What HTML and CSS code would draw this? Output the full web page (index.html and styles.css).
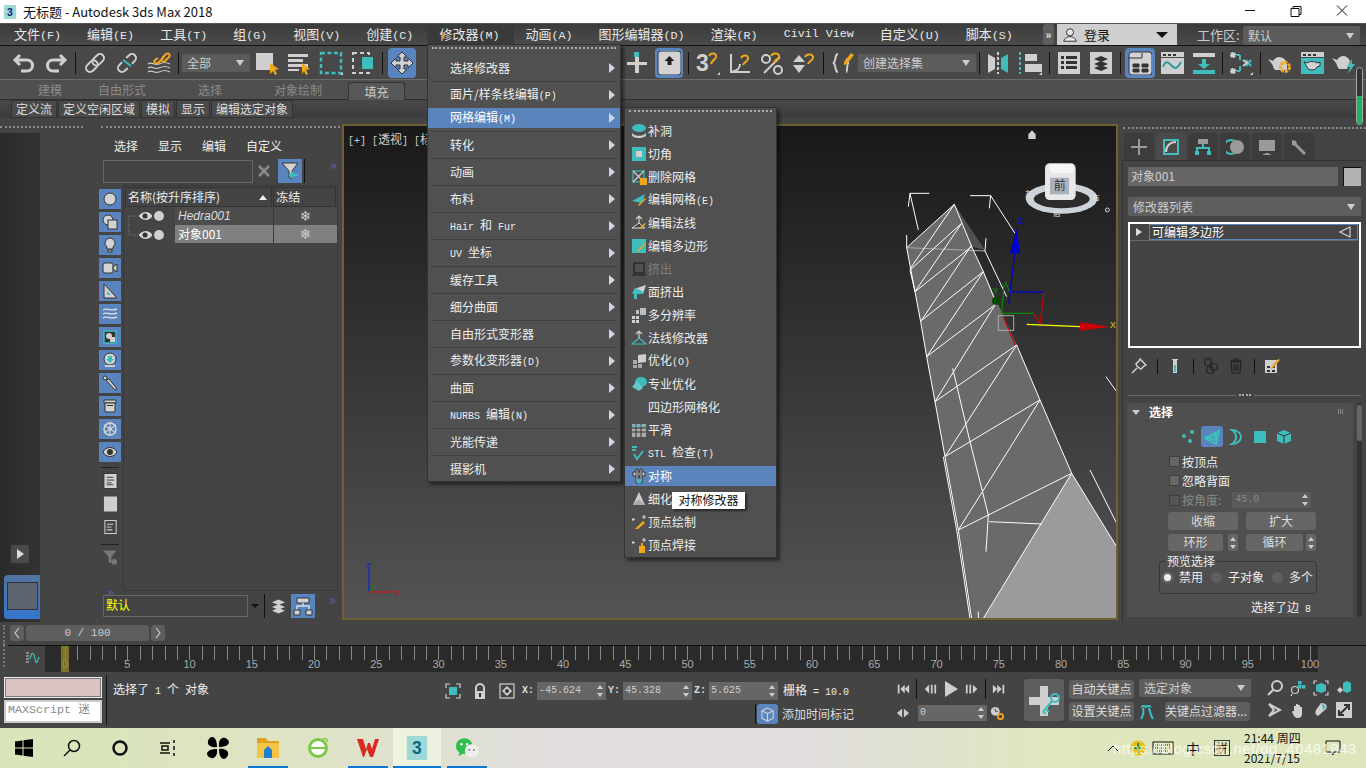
FILE: index.html
```html
<!DOCTYPE html>
<html lang="zh">
<head>
<meta charset="utf-8">
<title>无标题 - Autodesk 3ds Max 2018</title>
<link rel="stylesheet" href="styles.css">
</head>
<body>
<header class="titlebar">
  <svg class="appicon" viewBox="0 0 16 16"><rect x="1" y="0" width="14" height="16" class="teal2"/><text x="8" y="12" class="three">3</text></svg>
  <span class="apptitle">无标题 - Autodesk 3ds Max 2018</span>
  <div class="winbtns">
    <svg viewBox="0 0 46 23"><path d="M18 10.500h10" class="wl"/></svg>
    <svg viewBox="0 0 46 23"><path d="M18 8.500h8v8h-8zM20 8.500v-2h8v8h-2" class="wl"/></svg>
    <svg viewBox="0 0 46 23"><path d="M18 5.500l10 10M28 5.500l-10 10" class="wl"/></svg>
  </div>
</header>

<nav class="menubar">
  <span>文件<i class="la">(F)</i></span><span>编辑<i class="la">(E)</i></span><span>工具<i class="la">(T)</i></span><span>组<i class="la">(G)</i></span><span>视图<i class="la">(V)</i></span><span>创建<i class="la">(C)</i></span><span class="open">修改器<i class="la">(M)</i></span><span>动画<i class="la">(A)</i></span><span>图形编辑器<i class="la">(D)</i></span><span>渲染<i class="la">(R)</i></span><span class="la">Civil View</span><span>自定义<i class="la">(U)</i></span><span>脚本<i class="la">(S)</i></span>
  <div class="more">»</div>
  <div class="login">
    <svg viewBox="0 0 18 18" class="i16"><circle cx="9" cy="6" r="4" class="nofill-k"/><path d="M2 16c1-4 4-4 5-5h4c1 1 4 1 5 5z" class="nofill-k"/></svg>
    <span>登录</span><b class="blk"></b>
  </div>
  <span class="wslabel">工作区:</span>
  <div class="dd ws">默认</div>
</nav>

<div class="toolbar">
  <div class="tb"><svg viewBox="0 0 24 24"><path d="M8 4 3 9l5 5M3 9h12a5 5 0 0 1 0 11H9" class="s3"/></svg></div>
  <div class="tb"><svg viewBox="0 0 24 24"><path d="M16 4l5 5-5 5M21 9H9a5 5 0 0 0 0 11h6" class="s3"/></svg></div>
  <div class="sep"></div>
  <div class="tb"><svg viewBox="0 0 24 24"><g transform="rotate(-45 12 12)"><rect x="1" y="8" width="13" height="8" rx="4" class="s2"/><rect x="10" y="8" width="13" height="8" rx="4" class="s2"/></g></svg></div>
  <div class="tb"><svg viewBox="0 0 24 24"><g transform="rotate(-45 12 12)"><path d="M9 8H5a4 4 0 0 0 0 8h4M15 8h4a4 4 0 0 1 0 8h-4" class="s2"/></g><path d="M8 9l8 6" class="st"/></svg></div>
  <div class="tb"><svg viewBox="0 0 24 24"><path d="M1 13c4-3 6 2 11 0s6-2 11 0M1 17c4-3 6 2 11 0s6-2 11 0M1 21c4-3 6 2 11 0s6-2 11 0" class="s1"/><path d="M13 10l-2 2a2 2 0 0 1-3-3l3-2M15 7l4-4a2 2 0 0 1 3 3l-4 4a2 2 0 0 1-3 0M12 11l5-5" class="so"/></svg></div>
  <div class="sep"></div>
  <div class="dd all">全部</div>
  <div class="tb"><svg viewBox="0 0 24 24"><rect x="1" y="2" width="17" height="17" class="f"/><path d="M15 12l9 6-4 1 2 4-2 1-2-4-3 3z" class="o"/></svg></div>
  <div class="tb"><svg viewBox="0 0 24 24"><path d="M1 3h20v3H1zM1 8h15v3H1zM1 13h20v3H1zM1 18h11v2H1z" class="f"/><path d="M15 12l8 6-4 1 2 4-2 1-2-4-2 3z" class="o"/></svg></div>
  <div class="tb"><svg viewBox="0 0 24 24"><rect x="2" y="2" width="20" height="20" class="std"/><path d="M24 24h-3l3-3z" class="f"/></svg></div>
  <div class="tb"><svg viewBox="0 0 24 24"><rect x="2" y="2" width="16" height="20" class="sd"/><rect x="11" y="6" width="11" height="12" class="t"/></svg></div>
  <div class="sep"></div>
  <div class="tb act"><svg viewBox="0 0 24 24"><path d="M12 1l5 5h-3v4h4V7l5 5-5 5v-3h-4v4h3l-5 5-5-5h3v-4H6v3l-5-5 5-5v3h4V6H7z" class="fk"/></svg></div>
  <div class="spacer"></div>
  <div class="tb"><svg viewBox="0 0 24 24"><path d="M10 6h4v5h8v3h-8v8h-4v-8H2v-3h8z" class="f"/><rect x="9" y="1" width="5" height="5" class="t"/></svg></div>
  <div class="tb act"><svg viewBox="0 0 24 24"><rect x="1" y="0" width="23" height="24" rx="3" class="fk"/><path d="M12.500 5l5 5h-3v4h-4v-4h-3z" class="kf"/></svg></div>
  <div class="sep"></div>
  <div class="tb"><svg viewBox="0 0 24 24"><text x="0" y="20" class="big3">3</text><path d="M13 5c2-4 8-3 7 1-1 3-4 3-5 7" class="so"/><path d="M24 24h-3l3-3z" class="f"/></svg></div>
  <div class="tb"><svg viewBox="0 0 24 24"><path d="M3 3v18h19M3 21c6-1 9-4 9-8" class="s2"/><path d="M13 7c2-4 8-3 7 1-1 3-4 3-5 6" class="so"/></svg></div>
  <div class="tb"><svg viewBox="0 0 24 24"><circle cx="6" cy="8" r="4" class="s2"/><circle cx="18" cy="19" r="4" class="s2"/><path d="M20 6 4 22" class="s2"/><path d="M11 5c2-4 9-3 8 1-1 3-4 2-5 6" class="so"/></svg></div>
  <div class="tb"><svg viewBox="0 0 24 24"><path d="M1 11l6-7 6 7zM1 14h12l-6 8z" class="f"/><path d="M13 6c2-4 9-3 8 1-1 3-4 3-5 6" class="so"/></svg></div>
  <div class="sep"></div>
  <div class="tb"><svg viewBox="0 0 24 24"><path d="M7 3C3 3 6 11 2 12c4 1 1 9 5 9M15 8c2 1 0 4 3 4-3 0-1 9-3 9" class="s2"/><path d="M13 11 20 2l3 2-7 9-3 1z" class="o"/></svg></div>
  <div class="dd sets">创建选择集</div>
  <div class="sep nar"></div>
  <div class="tb"><svg viewBox="0 0 24 24"><path d="M2 3l7 4v11l-7 4z" class="f"/><path d="M22 3l-7 4v11l7 4z" class="t"/><path d="M12 1v22" class="sd2"/></svg></div>
  <div class="tb"><svg viewBox="0 0 24 24"><path d="M2 1v22" class="std2"/><path d="M7 3h12v7H7zM7 13h17v8H7z" class="f"/><path d="M24 24h-3l3-3z" class="f"/></svg></div>
  <div class="sep"></div>
  <div class="tb"><svg viewBox="0 0 24 24"><rect x="1" y="1" width="22" height="22" class="f"/><path d="M4 5h3v3H4zM9 5h11v3H9zM4 10h3v3H4zM9 10h11v3H9zM4 15h3v3H4zM9 15h11v3H9z" class="k"/></svg></div>
  <div class="tb"><svg viewBox="0 0 24 24"><rect x="1" y="1" width="22" height="22" class="f"/><path d="M12 5l7 3-7 3-7-3zM12 10l7 3-7 3-7-3zM12 14l7 3-7 3-7-3z" class="k"/></svg></div>
  <div class="sep"></div>
  <div class="tb act wide"><svg viewBox="0 0 24 24"><rect x="1" y="1" width="23" height="23" rx="3" class="fk"/><path d="M14 2v5M14 7H1M5 13h6v3H5zM14 13h6v3h-6zM5 18h6v3H5zM14 18h6v3h-6z" class="k2"/></svg></div>
  <div class="tb"><svg viewBox="0 0 24 24"><rect x="1" y="1" width="23" height="5" class="f"/><rect x="1" y="7" width="23" height="16" class="f"/><path d="M3 3h3v2H3zM8 3h3v2H8zM13 3h3v2h-3z" class="k"/><path d="M3 16c3-8 6-4 9-1s5 3 9-4" class="st2"/></svg></div>
  <div class="tb"><svg viewBox="0 0 24 24"><path d="M1 2h22v4H1z" class="f"/><path d="M1 19h22v4H1z" class="t"/><path d="M10 8h4v5h4l-6 5-6-5h4z" class="t"/></svg></div>
  <div class="sep nar"></div>
  <div class="tb"><svg viewBox="0 0 24 24"><path d="M7 4h4M7 20h4M11 4v5M11 20v-5M17 9l5 6M22 9l-5 6" class="st"/><path d="M14 9 18 12 14 15" class="s2"/><rect x="1" y="1" width="6" height="6" class="chk"/><rect x="1" y="17" width="6" height="6" class="chk"/><path d="M24 24h-3l3-3z" class="f"/></svg></div>
  <div class="sep"></div>
  <div class="tb"><svg viewBox="0 0 24 24"><path d="M0 8l5 2c2-3 4-4 6-4 4 0 7 3 8 6v7H7C5 17 5 14 4 13z" class="f"/><circle cx="17" cy="16" r="4.500" class="ogear"/></svg></div>
  <div class="tb"><svg viewBox="0 0 24 24"><rect x="1" y="1" width="23" height="5" class="f"/><rect x="1" y="7" width="23" height="16" class="t"/><path d="M3 3h3v2H3zM8 3h3v2H8zM13 3h3v2h-3z" class="k"/><path d="M4 11l3 1c2-2 8-2 10 0l3-1v4l-3 1c-1 4-9 4-10 0z" class="fk"/></svg></div>
  <div class="tb"><svg viewBox="0 0 24 24"><path d="M0 7l5 2c2-3 4-4 6-4 3 0 6 2 7 5l-3 8H7C5 16 5 13 4 12z" class="f"/><path d="M20 8l-5 8h3l-2 7 7-10h-3z" class="t"/></svg></div>
  <div class="meter"><div class="meter-fill"></div></div>
</div>

<div class="ribtabs">
  <span class="t1">建模</span><span class="t2">自由形式</span><span class="t3">选择</span><span class="t4">对象绘制</span><span class="t5">填充</span>
</div>
<div class="ribsub">
  <span>定义流</span><span>定义空闲区域</span><span>模拟</span><span>显示</span><span>编辑选定对象</span>
</div>

<main class="main">
  <section class="left">
    <div class="grips"><i class="g1"></i><i class="g2"></i></div>
    <div class="leftbody">
      <div class="gutter">
        <div class="playbtn"><b class="tri"></b></div>
        <div class="thumb"><div></div></div>
      </div>
      <div class="scene">
        <div class="scenemenu"><span>选择</span><span>显示</span><span>编辑</span><span>自定义</span></div>
        <div class="searchrow">
          <div class="input"></div>
          <svg class="xicon" viewBox="0 0 12 12"><path d="M1 1l10 10M11 1 1 11" class="xs"/></svg>
          <div class="bluebtn"><svg viewBox="0 0 20 20"><path d="M2 2h16l-6 8v8l-3-2v-6z" class="fk"/><path d="M18 14h-8m3-3-3 3 3 3" class="st"/></svg></div>
          <div class="vline"></div>
          <span class="chev">»</span>
        </div>
        <div class="scenebody">
          <div class="iconcol">
            <div class="bi"><svg viewBox="0 0 16 16"><circle cx="8" cy="8" r="6" class="fk"/></svg></div>
            <div class="bi"><svg viewBox="0 0 16 16"><circle cx="6" cy="6" r="5" class="fk"/><rect x="6" y="6" width="9" height="9" class="fk"/></svg></div>
            <div class="bi"><svg viewBox="0 0 16 16"><path d="M8 1a5 5 0 0 1 3 9v2H5v-2A5 5 0 0 1 8 1zM6 13h4v2H6z" class="fk"/></svg></div>
            <div class="bi"><svg viewBox="0 0 16 16"><rect x="1" y="3" width="10" height="10" rx="2" class="fk"/><path d="M11 7l4-3v8l-4-3z" class="fk"/></svg></div>
            <div class="bi"><svg viewBox="0 0 16 16"><path d="M2 1l13 14H2z" class="fk"/><path d="M5 8l4 4H5z" class="t"/></svg></div>
            <div class="bi"><svg viewBox="0 0 16 16"><path d="M1 4c4-3 6 2 14-1M1 8c4-3 6 2 14-1M1 12c4-3 6 2 14-1" class="s1k"/></svg></div>
            <div class="bi"><svg viewBox="0 0 16 16"><rect x="2" y="2" width="12" height="12" class="kt"/><circle cx="7" cy="7" r="3" class="f"/><rect x="8" y="8" width="5" height="5" class="f"/></svg></div>
            <div class="bi"><svg viewBox="0 0 16 16"><circle cx="8" cy="7" r="6" class="fk"/><path d="M6 4h4v3h2l-4 4-4-4h2z" class="t"/><path d="M3 13h10v2H3z" class="f"/></svg></div>
            <div class="bi"><svg viewBox="0 0 16 16"><circle cx="3" cy="3" r="2" class="fk"/><path d="M4 5l3-1 8 10-2 1z" class="fk"/></svg></div>
            <div class="bi"><svg viewBox="0 0 16 16"><path d="M2 2h12v3H2z" class="fk"/><path d="M3 5h10v9H3z" class="fk"/><path d="M5 7h6v1H5z" class="k"/></svg></div>
            <div class="bi"><svg viewBox="0 0 16 16"><circle cx="8" cy="8" r="6" class="s1k"/><path d="M8 1v14M2 4l12 8M14 4 2 12" class="s1"/><circle cx="8" cy="8" r="2" class="f"/></svg></div>
            <div class="bi"><svg viewBox="0 0 16 16"><path d="M1 8c3-6 11-6 14 0-3 6-11 6-14 0z" class="fk"/><circle cx="8" cy="8" r="3" class="k"/></svg></div>
            <div class="hr"></div>
            <div class="pi"><svg viewBox="0 0 16 16"><rect x="1" width="14" height="16" class="fk"/><path d="M4 4h7M4 7h8M4 10h5M4 12h7" class="ks"/></svg></div>
            <div class="pi"><svg viewBox="0 0 16 16"><rect x="1" width="14" height="16" class="f"/></svg></div>
            <div class="pi"><svg viewBox="0 0 16 16"><rect x="2" y="1" width="12" height="14" class="fo"/><path d="M4 5h7M4 8h5M4 11h6" class="s1"/></svg></div>
            <div class="hr"></div>
            <div class="pi dim"><svg viewBox="0 0 16 16"><path d="M0 0h14l-5 7v7l-3-2V7z" class="gr"/><circle cx="12" cy="12" r="3" class="gr"/></svg></div>
            <span class="chev low">»</span>
          </div>
          <div class="table">
            <div class="thead"><span class="th1">名称(按升序排序)<b class="up"></b></span><span class="th2">冻结</span></div>
            <div class="row">
              <svg class="tree" viewBox="0 0 48 18"><path d="M1 9h9M1 9v19" class="dot"/><path d="M10 9c4-6 12-6 15 0-3 6-11 6-15 0z" class="fk"/><circle cx="17" cy="9" r="2.500" class="k"/><circle cx="31" cy="9" r="5" class="f"/></svg>
              <span class="name hedra">Hedra001</span><span class="frz">❄</span>
            </div>
            <div class="row sel">
              <svg class="tree" viewBox="0 0 48 18"><path d="M1 0v10h9" class="dot"/><path d="M10 10c4-6 12-6 15 0-3 6-11 6-15 0z" class="fk"/><circle cx="17" cy="10" r="2.500" class="k"/><circle cx="31" cy="10" r="5" class="f"/></svg>
              <span class="name">对象001</span><span class="frz">❄</span>
            </div>
          </div>
        </div>
        <div class="layerrow">
          <div class="input yellow">默认</div>
          <b class="blk small"></b>
          <div class="vline"></div>
          <svg class="layers" viewBox="0 0 16 16"><path d="M8 1l7 3-7 3-7-3zM8 6l7 3-7 3-7-3zM8 10l7 3-7 3-7-3z" class="f"/></svg>
          <div class="bluebtn"><svg viewBox="0 0 20 20"><path d="M4 2h12v5H4z" class="fk"/><path d="M10 7v3M4 14v-4h12v4" class="s1k"/><path d="M1 14h6v5H1zM13 14h6v5h-6z" class="fk"/></svg></div>
          <span class="chev">»</span>
        </div>
      </div>
    </div>
  </section>

  <section class="viewport">
    <svg viewBox="344 126 772 492" class="vpsvg">
      <text x="348" y="144" class="vplabel"><tspan class="la">[+] [</tspan>透视<tspan class="la">] [</tspan>标</text>
      <g transform="translate(860 125) scale(.33333)">
        <path d="M283 238 140 368 165 500 182 590 200 695 225 830 255 995 295 1215 340 1480H370L635 1045 540 825 470 660 370 440 335 365Z" class="face"/>
        <path d="M283 238 375 375 335 365Z" class="face2"/>
        <path d="M370 1480 635 1045 770 1265V1480Z" class="face3"/>
        <path d="M140 368 375 378" class="wgrey"/>
        <path d="M150 205H208M150 205 175 315M150 205 145 245M330 212H392L465 325M392 212 388 250M140 330V368M378 340 375 378 440 515M140 368 283 238 335 365 370 440 405 525M140 368 165 500 182 590 200 695 225 830 255 995 295 1215 335 1480M150 435 165 500M250 995 290 1215 330 1480M470 660 540 825 635 1045 770 1265M305 295 150 435M335 365 165 500M370 440 180 590M283 238 150 432M305 295 165 500M335 360 182 590M370 440 200 695M405 540 200 695M405 540 225 830M470 660 225 830M470 660 255 995M540 825 255 995M540 825 295 1215M635 1045 295 1215M278 730 330 950 385 1170 378 1280M388 1190 545 1197M635 1045 370 1480M690 1035 770 1195M738 755 770 800M355 1460V1480" class="wire"/>
        <path d="M430 575 465 660" class="rline"/>
        <path d="M446 535 465 380M446 500 552 502" class="bline"/>
        <path d="M470 310 450 385H480Z" class="bfill"/>
        <path d="M552 502 540 595 520 565" class="rline"/>
        <path d="M425 565H520M432 478 425 565M435 470 450 500" class="gline"/>
        <path d="M500 598 660 605" class="yline"/>
        <path d="M660 592 750 605 660 617Z" class="rfill"/>
        <circle cx="408" cy="527" r="12" class="gfill"/>
        <rect x="415" y="572" width="46" height="44" class="grsq"/>
        <text x="473" y="298" class="gz gzb">Z</text>
        <text x="750" y="608" class="gz gzy">X</text>
        <text x="398" y="506" class="gz gzg">Y</text>
      </g>
      <g transform="translate(860 125) scale(.33333)">
        <path d="M505 42V28L516 16 527 28V42Z" class="f"/>
        <ellipse cx="605" cy="220" rx="108" ry="46" class="ring"/>
        <ellipse cx="605" cy="222" rx="84" ry="28" class="ringin"/>
        <rect x="555" y="115" width="92" height="110" rx="14" class="cube"/>
        <path d="M570 118h64l10 12-6 14h-62l-10-12z" class="cubetop"/>
        <rect x="570" y="158" width="57" height="50" class="cubef"/>
        <text x="599" y="196" class="cubet">前</text>
        <text x="495" y="212" class="cubem">左</text>
        <text x="580" y="272" class="cubem">后</text>
        <text x="697" y="224" class="cubem">右</text>
        <circle cx="742" cy="255" r="6" class="smallc"/>
      </g>
      <path d="M369 592V568" class="ax-b"/><path d="M369 592H394" class="ax-r"/><path d="M369 592l5-8" class="ax-g"/>
      <text x="366" y="568" class="axt axb">z</text><text x="395" y="595" class="axt axr">x</text>
    </svg>
  </section>

  <aside class="cmd">
    <i class="griph"></i>
    <div class="cmdtabs">
      <div class="ct"><svg viewBox="0 0 18 18"><path d="M8 1h2v7h7v2h-7v7H8v-7H1V8h7z" class="gf"/></svg></div>
      <div class="ct on"><svg viewBox="0 0 18 18"><rect x="2" y="2" width="14" height="14" class="st"/><path d="M4 14c0-6 4-10 10-10" class="s2"/></svg></div>
      <div class="ct"><svg viewBox="0 0 18 18"><path d="M4 1h10v5H4z" class="gf"/><path d="M9 6v4M3 13v-3h12v3" class="st"/><path d="M1 13h4v4H1zM13 13h4v4h-4z" class="t"/></svg></div>
      <div class="ct"><svg viewBox="0 0 18 18"><circle cx="5" cy="9" r="7" class="st"/><circle cx="11" cy="9" r="7" class="gf"/></svg></div>
      <div class="ct"><svg viewBox="0 0 18 18"><path d="M1 2h16v11H1zM7 15h4v1H7zM5 16h8v1H5z" class="gf"/></svg></div>
      <div class="ct"><svg viewBox="0 0 18 18"><path d="M2 2l4 1 1 3 9 9-2 2-9-9-3-1z" class="gf"/></svg></div>
    </div>
    <div class="cmdbody">
      <div class="namerow"><div class="namein">对象001</div><div class="swatch"></div></div>
      <div class="dd modlist">修改器列表</div>
      <div class="stack">
        <div class="stackrow"><b class="tri sm"></b><div class="stackitem"><span>可编辑多边形</span><svg viewBox="0 0 12 12"><path d="M11 1v10L1 6z" class="s1"/></svg></div></div>
      </div>
      <div class="stacktools">
        <svg viewBox="0 0 16 16"><path d="M9 1l6 6-2 1-3 3-2-1-2-2-1-2 3-3zM6 10l-5 5" class="pin"/></svg>
        <div class="ts"></div>
        <svg viewBox="0 0 16 16"><path d="M5 1h6v1h-1v13H6V2H5z" class="f"/><path d="M7 7h2v7H7z" class="t"/></svg>
        <div class="ts"></div>
        <svg viewBox="0 0 16 16"><circle cx="5" cy="4" r="3.500" class="dimst"/><circle cx="11" cy="9" r="3.500" class="dimst"/><circle cx="7" cy="12" r="3.500" class="dimst"/></svg>
        <svg class="trash" viewBox="0 0 16 16"><path d="M3 4h10l-1 11H4zM2 3h12M6 3V1h4v2M6 6v7M8 6v7M10 6v7" class="dimst"/></svg>
        <div class="ts"></div>
        <svg viewBox="0 0 16 16"><rect x="1" y="2" width="12" height="13" class="f"/><path d="M3 8h3v2H3zM8 8h3v2H8zM3 12h3v2H3zM8 12h3v2H8z" class="k"/><path d="M7 9l7-8 2 1-7 8-2 1z" class="o"/></svg>
      </div>
      <div class="sash"><i></i><span></span><i></i></div>
      <div class="rollwrap">
        <div class="rollout">
          <div class="rhead"><b class="blk wh"></b><strong>选择</strong><span class="dots"></span></div>
          <div class="subobj">
            <svg viewBox="0 0 16 16"><circle cx="3" cy="7" r="2" class="t"/><circle cx="11" cy="3" r="2" class="t"/><circle cx="9" cy="12" r="2" class="t"/></svg>
            <div class="subon"><svg viewBox="0 0 16 16"><path d="M1 9 15 2 12 15zM5 9l7-4-1 6z" class="st"/></svg></div>
            <svg viewBox="0 0 16 16"><path d="M4 1c6 0 9 4 9 7s-3 7-9 7c3-2 4-4 4-7S7 3 4 1z" class="st"/></svg>
            <svg viewBox="0 0 16 16"><rect x="2" y="2" width="12" height="12" class="t"/></svg>
            <svg viewBox="0 0 16 16"><path d="M8 1l7 3v8l-7 3-7-3V4z" class="t"/><path d="M1 4l7 3 7-3M8 7v8" class="ks"/></svg>
          </div>
          <label class="cb"><i></i>按顶点</label>
          <label class="cb"><i></i>忽略背面</label>
          <div class="cb off"><i></i>按角度:<div class="spin ang"><span class="mono">45.0</span><b class="ud"></b></div></div>
          <div class="btns r1"><span>收缩</span><span>扩大</span></div>
          <div class="btns r2"><span>环形</span><em><b class="ud"></b></em><span>循环</span><em><b class="ud"></b></em></div>
          <fieldset class="preview">
            <legend>预览选择</legend>
            <i class="rad on"></i><span>禁用</span><i class="rad"></i><span>子对象</span><i class="rad"></i><span>多个</span>
          </fieldset>
          <div class="selinfo">选择了边<i class="la"> 8</i></div>
        </div>
        <div class="sbar"><i></i></div>
      </div>
    </div>
  </aside>
</main>

<div class="timeslider">
  <i class="vg"></i>
  <div class="ts-b"><svg viewBox="0 0 8 12"><path d="M6 1 2 6l4 5" class="s1"/></svg></div>
  <div class="ts-m mono">0 / 100</div>
  <div class="ts-b"><svg viewBox="0 0 8 12"><path d="M2 1l4 5-4 5" class="s1"/></svg></div>
</div>
<div class="track">
  <i class="vg short"></i>
  <svg class="curve" viewBox="0 0 16 14"><path d="M1 2h3M1 5h3M1 8h3M1 11h3" class="s1"/><path d="M5 8c2-9 4-6 5 0s2 4 4-2" class="st1"/></svg>
  <div class="bar">
    <div class="ticks"></div>
    <div class="labels">
      <span>0</span><span>5</span><span>10</span><span>15</span><span>20</span><span>25</span><span>30</span><span>35</span><span>40</span><span>45</span><span>50</span><span>55</span><span>60</span><span>65</span><span>70</span><span>75</span><span>80</span><span>85</span><span>90</span><span>95</span><span>100</span>
    </div>
    <div class="key"></div>
  </div>
</div>

<div class="status">
  <div class="scr">
    <div class="pink"></div>
    <div class="mini la">MAXScript 迷</div>
  </div>
  <div class="vbar"></div>
  <div class="msg">选择了<i class="la"> 1 </i>个<i class="la"> </i>对象</div>
  <div class="coords">
    <div class="corow">
      <svg class="i16" viewBox="0 0 16 16"><path d="M1 5V1h4M11 1h4v4M15 11v4h-4M5 15H1v-4" class="s1"/><rect x="4" y="4" width="8" height="8" class="t"/></svg>
      <svg class="i16" viewBox="0 0 16 16"><path d="M4 8V5a4 4 0 0 1 8 0v3" class="s2"/><rect x="3" y="8" width="10" height="8" class="f"/><rect x="7" y="10" width="2" height="4" class="k"/></svg>
      <svg class="i16" viewBox="0 0 16 16"><rect x="1" y="1" width="14" height="14" class="s1"/><path d="M8 3l5 5-5 5-5-5z" class="f"/><circle cx="8" cy="8" r="2" class="k"/></svg>
      <span class="axl mono">X:</span><div class="spin cx"><span class="mono">-45.624</span><b class="ud"></b></div>
      <span class="axl mono">Y:</span><div class="spin cx"><span class="mono">45.328</span><b class="ud"></b></div>
      <span class="axl mono">Z:</span><div class="spin cx"><span class="mono">5.625</span><b class="ud"></b></div>
      <span class="grid">栅格<i class="la"> = 10.0</i></span>
    </div>
    <div class="tagrow">
      <div class="tl"></div>
      <div class="tagbtn"><svg viewBox="0 0 16 16"><path d="M8 1l6 3v8l-6 3-6-3V4z" class="s1"/><path d="M2 4l6 3 6-3M8 7v8" class="s1"/></svg></div>
      <span>添加时间标记</span>
    </div>
  </div>
  <div class="play">
    <div class="pr">
      <svg viewBox="0 0 16 16"><path d="M2 3h2v10H2zM10 3v10L5 8zM15 3v10l-5-5z" class="f"/></svg>
      <div class="psep"></div>
      <svg viewBox="0 0 16 16"><path d="M7 3v10L2 8zM9 3h2v10H9zM13 3h2v10h-2z" class="f"/></svg>
      <svg class="bigp" viewBox="0 0 16 16"><path d="M2 0l13 8-13 8z" class="f"/></svg>
      <svg viewBox="0 0 16 16"><path d="M1 3h2v10H1zM5 3h2v10H5zM9 3v10l5-5z" class="f"/></svg>
      <div class="psep"></div>
      <svg viewBox="0 0 16 16"><path d="M1 3v10l5-5zM6 3v10l5-5zM12 3h2v10h-2z" class="f"/></svg>
    </div>
    <div class="pr second">
      <svg viewBox="0 0 16 16"><path d="M7 3v10L1 8zM9 3v10l6-5z" class="f"/></svg>
      <div class="spin fr"><span class="mono">0</span><b class="ud"></b></div>
      <svg viewBox="0 0 16 16"><circle cx="6" cy="6" r="5" class="f"/><path d="M6 3v3h3" class="ks"/><circle cx="12" cy="12" r="3" class="ring-o"/></svg>
    </div>
  </div>
  <div class="bigkey"><svg viewBox="0 0 40 40"><path d="M16 6h8v11h11v8H24v11h-8V25H5v-8h11z" class="f"/><circle cx="31" cy="18" r="4" class="st"/><path d="M28 21 19 32M22 29l3 3M19 32l3 2" class="st"/></svg></div>
  <div class="keys"><span>自动关键点</span><span>设置关键点</span></div>
  <div class="keyopts">
    <div class="dd selobj">选定对象</div>
    <div class="keyfil">
      <svg viewBox="0 0 16 16"><path d="M2 3c3-2 4-1 5 0 1-1 2-2 5 0M4 4c1 4 0 8-2 11M10 4c1 4 2 8 4 11" class="st"/></svg>
      <span>关键点过滤器...</span>
    </div>
  </div>
  <div class="nav">
    <svg viewBox="0 0 16 16"><circle cx="10" cy="6" r="5" class="s2"/><path d="M6 10l-5 5" class="s2"/></svg>
    <svg viewBox="0 0 16 16"><circle cx="5" cy="10" r="3.500" class="s1"/><path d="M2 14l-1 2" class="s1"/><rect x="8" y="1" width="3.500" height="3.500" class="t"/><rect x="12" y="5" width="3.500" height="3.500" class="t"/><rect x="8" y="5" width="3.500" height="3.500" class="t"/></svg>
    <svg viewBox="0 0 16 16"><path d="M1 4V1h3M12 1h3v3M15 12v3h-3M4 15H1v-3" class="s1"/><path d="M8 3l5 2v6l-5 2-5-2V5z" class="t"/></svg>
    <svg viewBox="0 0 16 16"><path d="M11 1l4 2v8l-4 2-4-2V3z" class="t"/><path d="M1 10l3-3 3 3-3 3z" class="f"/></svg>
    <svg viewBox="0 0 16 16"><path d="M2 2l11 6-11 6 5-6z" class="s2"/></svg>
    <svg viewBox="0 0 16 16"><path d="M4 9V4h2v4-6h2v6-5h2v5-3h2v7c0 3-2 4-4 4-3 0-4-2-6-6l1-1z" class="f"/></svg>
    <svg viewBox="0 0 16 16"><path d="M8 1c5 0 7 3 5 6L5 14c-3-1-3-4-2-6z" class="f"/><path d="M9 1l4 4-3 3z" class="t"/></svg>
    <svg viewBox="0 0 16 16"><rect x="0" y="0" width="16" height="16" class="f"/><path d="M3 13 13 3M8 3h5v5M3 8v5h5" class="ks2"/></svg>
  </div>
</div>

<footer class="taskbar">
  <div class="tk"><svg viewBox="0 0 18 18"><path d="M0 2.500 7.500 1.500v7H0zM8.500 1.300 18 0v8.500H8.500zM0 9.500h7.500v7L0 15.500zM8.500 9.500H18V18l-9.500-1.300z" class="bk"/></svg></div>
  <div class="tk"><svg viewBox="0 0 18 18"><circle cx="11" cy="7" r="5.500" class="bs"/><path d="M7 11 1 17" class="bs"/></svg></div>
  <div class="tk"><svg viewBox="0 0 18 18"><circle cx="9" cy="9" r="6.500" class="bs2"/></svg></div>
  <div class="tk"><svg viewBox="0 0 18 18"><path d="M1 4h10M1 14h10M3 7h6v4H3zM15 1v3M15 7v4M15 14v3" class="bs"/></svg></div>
  <div class="tk pin1"><svg viewBox="0 0 24 24"><path d="M11 11C3 12 0 7 3 3s8-2 8 8zM13 11c-1-8 4-11 8-8s2 8-8 8zM13 13c8-1 11 4 8 8s-8 2-8-8zM11 13c1 8-4 11-8 8s-2-8 8-8z" class="bk"/></svg></div>
  <div class="tk ul"><svg viewBox="0 0 24 24"><path d="M1 2h9l2 3h11v17H1z" class="fold1"/><path d="M1 7h22v15H1z" class="fold2"/><path d="M8 14l4-4 4 4v8H8z" class="fold3"/></svg></div>
  <div class="tk ie"><svg viewBox="0 0 24 24"><circle cx="12" cy="12" r="10" class="ie1"/><circle cx="12" cy="12" r="7" class="ie2"/><path d="M5 11h14v2H5z" class="ie1"/><path d="M17 3c3-1 5 0 4 3" class="ie3"/></svg></div>
  <div class="tk ul"><svg viewBox="0 0 24 24"><path d="M1 3h6l3 10 2-6h2l2 6 3-10h4l-6 18h-3l-3-8-3 8H7z" class="wps"/></svg></div>
  <div class="tk ul cur"><svg viewBox="0 0 24 26"><rect x="1" y="0" width="22" height="26" class="teal2"/><text x="12" y="19" class="three big">3</text></svg></div>
  <div class="tk ul"><svg viewBox="0 0 26 24"><ellipse cx="10" cy="10" rx="9" ry="8.500" class="wc1"/><path d="M5 16l-1 5 5-3z" class="wc1"/><ellipse cx="18" cy="15" rx="7.500" ry="7" class="wc2"/><circle cx="7" cy="8" r="1.300" class="wcw"/><circle cx="13" cy="8" r="1.300" class="wcw"/><circle cx="15.500" cy="14" r="1" class="wcg"/><circle cx="20.500" cy="14" r="1" class="wcg"/></svg></div>
  <div class="tray">
    <svg class="caret" viewBox="0 0 12 8"><path d="M1 7l5-5 5 5" class="bs1"/></svg>
    <svg class="trayi" viewBox="0 0 16 16"><circle cx="8" cy="8" r="7.500" class="tr1"/><path d="M7 3h2v10H7zM4 7h8v2H4z" class="tr2"/></svg>
    <svg class="kbd" viewBox="0 0 22 16"><rect x="1" y="2" width="20" height="12" class="bs1"/><path d="M3 5h16M3 8h16M5 11h12" class="bd"/></svg>
    <span class="ime">中</span>
    <span class="ime box">拼</span>
    <div class="clock"><span>21:44 周四</span><span>2021/7/15</span></div>
    <svg class="notif" viewBox="0 0 16 16"><path d="M1 1h14v11H9l-1 3-1-3H1z" class="bs1"/></svg>
  </div>
</footer>

<div class="menu m1">
  <div class="gripm"></div>
  <div class="mi"><span>选择修改器</span><b class="arr"></b></div><hr>
  <div class="mi"><span>面片/样条线编辑<i class="la">(P)</i></span><b class="arr"></b></div><div class="gap"></div>
  <div class="mi hl"><span>网格编辑<i class="la">(M)</i></span><b class="arr"></b></div><hr>
  <div class="mi"><span>转化</span><b class="arr"></b></div><hr>
  <div class="mi"><span>动画</span><b class="arr"></b></div><hr>
  <div class="mi"><span>布料</span><b class="arr"></b></div><hr>
  <div class="mi"><span><i class="la">Hair </i>和<i class="la"> Fur</i></span><b class="arr"></b></div><hr>
  <div class="mi"><span><i class="la">UV </i>坐标</span><b class="arr"></b></div><hr>
  <div class="mi"><span>缓存工具</span><b class="arr"></b></div><hr>
  <div class="mi"><span>细分曲面</span><b class="arr"></b></div><hr>
  <div class="mi"><span>自由形式变形器</span><b class="arr"></b></div><hr>
  <div class="mi"><span>参数化变形器<i class="la">(D)</i></span><b class="arr"></b></div><hr>
  <div class="mi"><span>曲面</span><b class="arr"></b></div><hr>
  <div class="mi"><span><i class="la">NURBS </i>编辑<i class="la">(N)</i></span><b class="arr"></b></div><hr>
  <div class="mi"><span>光能传递</span><b class="arr"></b></div><hr>
  <div class="mi"><span>摄影机</span><b class="arr"></b></div>
</div>

<div class="menu m2">
  <div class="gripm"></div>
  <div class="si"><svg viewBox="0 0 16 16"><ellipse cx="8" cy="5" rx="7" ry="4" class="t"/><path d="M1 9c0 5 14 5 14 0v3c0 4-14 4-14 0z" class="f"/></svg><span>补洞</span></div>
  <div class="si"><svg viewBox="0 0 16 16"><rect x="1" y="1" width="14" height="14" class="t"/><rect x="5" y="5" width="6" height="6" class="f"/></svg><span>切角</span></div>
  <div class="si"><svg viewBox="0 0 16 16"><rect x="2" y="2" width="11" height="11" class="st1"/><path d="M2 2l11 11M13 2 2 13" class="s1"/><rect x="9" y="9" width="7" height="7" class="o"/></svg><span>删除网格</span></div>
  <div class="si"><svg viewBox="0 0 16 16"><path d="M1 9 14 2 11 11z" class="t"/><path d="M8 14l7-7-1-1-7 7z" class="o"/></svg><span>编辑网格<i class="la">(E)</i></span></div>
  <div class="si"><svg viewBox="0 0 16 16"><path d="M1 13l7-5 6 5z" class="fo"/><path d="M8 9V2M5 4l3-3 3 3" class="s1"/><path d="M9 14l6-5-1-1-6 5z" class="o"/></svg><span>编辑法线</span></div>
  <div class="si"><svg viewBox="0 0 16 16"><rect x="1" y="1" width="14" height="14" class="t"/><path d="M7 14l8-8-1-1-8 8z" class="o"/></svg><span>编辑多边形</span></div>
  <div class="si off"><svg viewBox="0 0 16 16"><rect x="3" y="2" width="10" height="10" class="dimst"/><path d="M1 14h14" class="dimst"/></svg><span>挤出</span></div>
  <div class="si"><svg viewBox="0 0 16 16"><path d="M3 5 15 1 12 10H4z" class="f"/><path d="M1 9 5 4l7 4v2H6v5H3v-5z" class="t"/></svg><span>面挤出</span></div>
  <div class="si"><svg viewBox="0 0 16 16"><path d="M1 9h3v3H1zM5 9h3v3H5zM1 13h3v3H1zM5 13h3v3H5z" class="f"/><path d="M9 1h6v7H9zM5 3h3v4H5z" class="grid2"/></svg><span>多分辨率</span></div>
  <div class="si"><svg viewBox="0 0 16 16"><path d="M1 14l7-6 7 6z" class="st1"/><path d="M8 8V1M5 4l3-3 3 3" class="s1"/></svg><span>法线修改器</span></div>
  <div class="si"><svg viewBox="0 0 16 16"><path d="M7 2l8-1v8l-8 1z" class="f"/><path d="M2 7h4v4H2zM7 11h4v4H7zM2 12h4v3H2z" class="fgr"/></svg><span>优化<i class="la">(O)</i></span></div>
  <div class="si"><svg viewBox="0 0 16 16"><ellipse cx="10" cy="6" rx="6" ry="5" class="t"/><path d="M1 11l5-6 6 7-4 3z" class="tlt"/></svg><span>专业优化</span></div>
  <div class="si"><i class="noicon"></i><span>四边形网格化</span></div>
  <div class="si"><svg viewBox="0 0 16 16"><rect x="1" y="2" width="14" height="13" class="fgr"/><path d="M1 6h14M1 10h14M5 2v13M10 2v13" class="ks"/><path d="M1 4h14" class="st1"/></svg><span>平滑</span></div>
  <div class="si"><svg viewBox="0 0 16 16"><path d="M1 2h5M1 5h4M3 9l3 5 6-8" class="st"/></svg><span><i class="la">STL </i>检查<i class="la">(T)</i></span></div>
  <div class="si hl"><svg viewBox="0 0 16 16"><path d="M2 4h12v4H2z" class="fk"/><path d="M5 1h2v14H5zM9 1h2v14H9z" class="fk"/><path d="M6 11h4v4H6z" class="t"/></svg><span>对称</span></div>
  <div class="si"><svg viewBox="0 0 16 16"><path d="M8 1l6 13H2z" class="f"/><path d="M8 8l6 6H2z" class="fgr"/></svg><span>细化</span></div>
  <div class="si"><svg viewBox="0 0 16 16"><path d="M13 1v4M11 3h4M2 4v3M1 5.500h3" class="s1"/><path d="M4 15l8-8 2 2-7 6z" class="o"/></svg><span>顶点绘制</span></div>
  <div class="si"><svg viewBox="0 0 16 16"><path d="M13 1v4M11 3h4M2 4v3M1 5.500h3" class="s1"/><rect x="8" y="9" width="6" height="7" class="o"/><path d="M10 6h2v3h-2z" class="o"/></svg><span>顶点焊接</span></div>
</div>

<div class="tooltip">对称修改器</div>
<div class="watermark">https://blog.csdn.net/qq_40481843</div>
</body>
</html>
```
FILE: styles.css
```css
*{box-sizing:border-box}
html,body{margin:0;padding:0;width:1366px;height:768px;overflow:hidden}
body{background:#444;color:#ddd;font:12px/1 "Noto Sans CJK SC","Liberation Sans",sans-serif;display:flex;flex-direction:column;position:relative}
i{font-style:normal}
svg{display:block;flex:none}
.la,.mono{font-family:"Liberation Mono","Noto Sans CJK SC",monospace;font-size:10px;font-style:normal;white-space:pre}

/* svg paint classes */
.f{fill:#cfcfcf}.t{fill:#3fbcbc}.o{fill:#f2a71b}.k{fill:#333}
.k2{fill:#333;stroke:#333;stroke-width:1}
.fk{fill:#d2d2d2;stroke:#333;stroke-width:1}
.kf{fill:#222}
.fo{fill:#444;stroke:#ddd;stroke-width:1}
.fgr{fill:#aaa}
.gf{fill:#9a9a9a}
.gr{fill:#777}
.chk{fill:#cfcfcf;stroke:#333;stroke-width:1;stroke-dasharray:2 1}
.s1,.s2,.s3,.st,.st1,.st2,.so,.sd,.std,.sd2,.std2,.s1k,.ks,.ks2,.xs,.pin,.dimst,.dot{fill:none}
.s1{stroke:#cfcfcf;stroke-width:1.200}
.s2{stroke:#cfcfcf;stroke-width:2}
.s3{stroke:#cfcfcf;stroke-width:3}
.st{stroke:#3fbcbc;stroke-width:2}
.st1{stroke:#3fbcbc;stroke-width:1.200}
.st2{stroke:#2a9d9d;stroke-width:2}
.so{stroke:#f2a71b;stroke-width:2}
.sd{stroke:#cfcfcf;stroke-width:2;stroke-dasharray:4 3}
.std{stroke:#3fbcbc;stroke-width:2.500;stroke-dasharray:4 2.500}
.sd2{stroke:#cfcfcf;stroke-width:2;stroke-dasharray:3 2}
.std2{stroke:#3fbcbc;stroke-width:2;stroke-dasharray:3 2}
.s1k{stroke:#dcdcdc;stroke-width:1.400}
.ks{stroke:#333;stroke-width:1}
.ks2{stroke:#333;stroke-width:2}
.xs{stroke:#8a8a8a;stroke-width:2.500}
.pin{stroke:#cfcfcf;stroke-width:1.500}
.dimst{stroke:#222;stroke-width:1.200}
.dot{stroke:#777;stroke-width:1;stroke-dasharray:1 1}
.kt{fill:#333;stroke:#3fbcbc;stroke-width:1.500}
.tlt{fill:#63c9c9}
.grid2{fill:#cfcfcf;opacity:.85}
.ogear{fill:none;stroke:#f2a71b;stroke-width:3;stroke-dasharray:3 1}
.ring-o{fill:none;stroke:#f2a71b;stroke-width:2}
.three{font:bold 12px "Liberation Sans",sans-serif;fill:#127;text-anchor:middle}
.three.big{font-size:19px;fill:#0d6a7a}
.teal2{fill:#9fd8d8}
.big3{font:bold 23px "Liberation Sans",sans-serif;fill:#cfcfcf}

/* title bar */
.titlebar{height:23px;flex:none;background:#fff;display:flex;align-items:center;color:#111;padding-left:3px}
.appicon{width:14px;height:16px}
.apptitle{margin-left:6px;font-size:13px;white-space:pre}
.winbtns{margin-left:auto;display:flex;padding-right:1px}
.winbtns svg{width:46px;height:23px}
.wl{fill:none;stroke:#111;stroke-width:1}

/* menu bar */
.menubar{height:23px;flex:none;display:flex;align-items:center;gap:26px;padding-left:14px;background:linear-gradient(#3b3b3b,#4b4b4b);border-top:1px solid #555;border-bottom:1px solid #111;font-size:13px;color:#e8e8e8;position:relative}
.menubar .la{font-size:11.700px}
.menubar>span{white-space:pre;flex:none}
.menubar .open{background:#3a3a3a;margin:0 -15px 0 -12px;padding:3px 15px 0 12px;height:21px}
.more{position:absolute;left:1043px;top:0;width:11px;height:21px;background:#5e5e5e;border-radius:3px;color:#eee;font-weight:bold;font-size:11px;text-align:center;line-height:20px}
.login{position:absolute;left:1057px;top:0;width:120px;height:21px;background:#cfcfcf;color:#111;display:flex;align-items:center;padding:0 9px 0 5px;gap:6px}
.nofill-k{fill:#e8e8e8;stroke:#222;stroke-width:1}
.i16{width:16px;height:16px}
.blk{display:block;width:0;height:0;border:5px solid transparent;border-top:5px solid #111;border-bottom:0;border-left-width:5px}
.login .blk{margin-left:auto;border-left-width:6px;border-right-width:6px;border-top-width:6px}
.wslabel{position:absolute;left:1197px;top:4px;color:#ccc}
.dd{background:#5c5c5c;color:#ccc;display:flex;align-items:center;padding-left:5px;position:relative;border-radius:2px}
.dd::after{content:"";position:absolute;right:6px;top:50%;margin-top:-3px;border:4px solid transparent;border-top:6px solid #ccc;border-bottom:0}
.ws{position:absolute;left:1243px;top:2px;width:117px;height:19px;font-size:12px}

/* toolbar */
.toolbar{height:34px;flex:none;display:flex;align-items:center;padding-left:8px;background:#484848;border-bottom:1px solid #6a6a6a;position:relative}
.tb{width:32px;height:30px;flex:none;display:flex;align-items:center;justify-content:center}
.tb svg{width:24px;height:24px}
.tb.act{background:#5a84bd;border-radius:4px;width:28px;margin:0 2px}
.tb.act.wide{width:30px;margin:0 1px}
.sep{width:7px;height:22px;flex:none;display:flex;justify-content:center}
.sep::before{content:"";width:1px;background:#111}
.sep.nar{width:5px}
.spacer{width:203px;flex:none}
.all{width:68px;height:18px;flex:none;margin-right:1px}
.sets{width:118px;height:18px;flex:none;margin-left:-1px;margin-right:1px}
.meter{position:absolute;left:1356px;top:21px;width:7px;height:58px;border:1px solid #aaa;border-radius:4px;background:#333;z-index:3}
.meter-fill{position:absolute;left:0;right:0;bottom:0;height:28px;background:#1fb45a;border-radius:0 0 3px 3px}

/* ribbon */
.ribtabs{height:20px;flex:none;background:#4f4f4f;border-bottom:1px solid #2e2e2e;position:relative;display:flex;align-items:center;color:#8a8a8a;padding-left:38px}
.ribtabs span{flex:none}
.t2{margin-left:36px}.t3{margin-left:52px}.t4{margin-left:52px}
.t5{margin-left:26px;width:57px;height:18px;margin-top:2px;background:#585858;border:1px solid #333;border-bottom:0;border-radius:3px 3px 0 0;color:#ccc;text-align:center;line-height:17px}
.ribsub{height:18px;flex:none;display:flex;gap:1px;padding-left:11px;background:linear-gradient(#484848,#3c3c3c)}
.ribsub span{height:18px;padding:0 4px;border:1px solid #333;background:#4a4a4a;color:#ddd;line-height:15px;flex:none}

/* main */
.main{height:504px;flex:none;display:flex;background:#444}
.left{width:342px;flex:none;display:flex;flex-direction:column}
.grips{height:15px;flex:none;display:flex;position:relative;padding-top:8px}
.grips i{display:block;height:2px;border-top:2px dotted #8a8a8a}
.g1{width:83px}.g2{width:239px;margin-left:18px}
.leftbody{flex:1;display:flex;min-height:0}
.gutter{width:40px;flex:none;background:linear-gradient(90deg,#2a2a2a,#333);display:flex;flex-direction:column;align-items:flex-start;position:relative}
.playbtn{width:20px;height:20px;margin:411px 0 0 10px;background:#4a4a4a;border:1px solid #333;border-radius:3px;display:flex;align-items:center;justify-content:center}
.tri{display:block;width:0;height:0;border:5px solid transparent;border-left:7px solid #ddd;border-right:0}
.tri.sm{border-width:4px 0 4px 6px;border-color:transparent transparent transparent #ddd;border-style:solid}
.thumb{width:36px;height:44px;margin:11px 0 0 4px;background:linear-gradient(#51739f,#3477cf);border-radius:4px 0 0 4px;padding:7px 2px 9px 3px}
.thumb div{height:100%;background:#5c6470;border:1px solid #333}
.scene{width:302px;flex:none;display:flex;flex-direction:column;padding-left:59px}
.scenemenu{height:26px;flex:none;display:flex;gap:20px;padding-left:15px;align-items:center;color:#eee}
.searchrow{height:24px;flex:none;display:flex;align-items:center;padding-left:4px}
.input{width:150px;height:23px;flex:none;border:1px solid #666;background:#444}
.xicon{width:12px;height:12px;margin:0 8px 0 5px}
.bluebtn{width:24px;height:24px;flex:none;background:#5a84bd;display:flex;align-items:center;justify-content:center}
.bluebtn svg{width:20px;height:20px}
.vline{width:1px;height:24px;flex:none;background:#111;margin-left:2px}
.chev{color:#5a5a9a;font-size:13px;font-weight:bold;margin-left:25px;margin-top:-14px}
.scenebody{height:406px;flex:none;display:flex;margin-top:2px}
.iconcol{width:24px;flex:none;display:flex;flex-direction:column;gap:3px;padding-top:4px;align-items:flex-start}
.bi{width:22px;height:20px;flex:none;background:#5a84bd;display:flex;align-items:center;justify-content:center}
.bi svg{width:16px;height:16px}
.hr{width:18px;height:1px;margin:2px 2px;background:#222;flex:none}
.pi{width:22px;height:17px;display:flex;justify-content:center;flex:none;margin-bottom:3px}
.pi svg{width:15px;height:16px}
.chev.low{margin:12px 0 0 8px}
.table{width:215px;flex:none;border:1px solid #383838;background:#444;margin-left:0}
.thead{height:21px;display:flex;gap:1px;padding:1px}
.thead span{border:1px solid #333;display:flex;align-items:center;padding-left:2px;color:#eee;height:20px}
.th1{width:148px;position:relative}
.th2{width:63px}
.up{position:absolute;right:4px;top:7px;border:4px solid transparent;border-bottom:5px solid #eee;border-top:0}
.row{height:18px;display:flex;align-items:center;background:linear-gradient(90deg,#444 51px,#4d4d4d 51px)}
.row.sel{background:linear-gradient(90deg,#444 51px,#808080 51px)}
.tree{width:48px;height:18px;margin-left:4px}
.name{width:97px;padding-left:2px;color:#fff;flex:none}
.hedra{font-family:"Liberation Sans",sans-serif;font-style:italic;color:#ddd}
.frz{flex:1;text-align:center;color:#ccc;font-family:"DejaVu Sans",sans-serif;font-size:14px;border-left:1px solid #3a3a3a;height:18px;line-height:18px}
.layerrow{height:24px;flex:none;display:flex;align-items:center;padding-left:4px;margin-top:3px}
.layerrow .input{width:145px;height:22px}
.yellow{color:#ff0;padding:3px 2px}
.blk.small{margin-left:3px;border-width:4px;border-top-width:4px;border-bottom:0;margin-right:5px}
.layers{width:15px;height:16px;margin:0 5px 0 6px}
.layerrow .vline{margin:0}
.layerrow .chev{margin-left:14px}

/* viewport */
.viewport{width:776px;height:496px;margin-top:6px;flex:none;border:2px solid #6e6030;background:linear-gradient(#191919,#545454)}
.vpsvg{width:772px;height:492px}
.vplabel{font:12px "Noto Sans CJK SC",sans-serif;fill:#ccc}
.vplabel .la{font-size:10px}
.face{fill:#6a6a6a}
.face2{fill:#505050}
.face3{fill:#9b9b9b}
.wire{fill:none;stroke:#fff;stroke-width:3}
.wgrey{fill:none;stroke:#aaa;stroke-width:3}
.rline{fill:none;stroke:#d00000;stroke-width:3.500}
.bline{fill:none;stroke:#0000c8;stroke-width:3.500}
.gline{fill:none;stroke:#0a8a0a;stroke-width:3.500}
.yline{fill:none;stroke:#ff0;stroke-width:3.500}
.bfill{fill:#0000d0}
.rfill{fill:#d00000}
.gfill{fill:#004a00}
.grsq{fill:none;stroke:#aaa;stroke-width:3}
.gz{font:bold 26px "Liberation Sans",sans-serif}
.gzb{fill:#1010c0}.gzy{fill:#b8a820}.gzg{fill:#0a7a0a}
.ring{fill:#cdd3da}
.ringin{fill:#2c2c2c}
.cube{fill:#e8e8e8}
.cubetop{fill:#f6f6f6}
.cubef{fill:#a9b2bd}
.cubet{font:36px "Noto Sans CJK SC",sans-serif;fill:#333;text-anchor:middle}
.cubem{font:22px "Noto Sans CJK SC",sans-serif;fill:#e4e4e4}
.smallc{fill:#333;stroke:#ccc;stroke-width:3}
.ax-b,.ax-r,.ax-g{fill:none;stroke-width:1.200}
.ax-b{stroke:#1020d0}.ax-r{stroke:#d01010}.ax-g{stroke:#0a8a0a}
.axt{font:9px "Liberation Mono",monospace}
.axb{fill:#1020d0}.axr{fill:#d01010}

/* command panel */
.cmd{width:248px;flex:none;padding-left:4px;display:flex;flex-direction:column}
.griph{display:block;height:2px;margin:9px 0 4px 1px;border-top:2px dotted #8a8a8a}
.cmdtabs{height:27px;flex:none;display:flex;gap:2px;padding-left:2px;align-items:flex-end}
.ct{width:30px;height:27px;background:#3c3c3c;border-radius:5px 5px 0 0;display:flex;align-items:center;justify-content:center}
.ct svg{width:18px;height:18px}
.ct.on{background:#4a4a4a}
.cmdbody{flex:1;border-left:1px solid #333;border-top:1px solid #333;padding:6px 5px 0 5px;display:flex;flex-direction:column;min-height:0}
.namerow{height:19px;flex:none;display:flex;justify-content:space-between}
.namein{width:210px;background:#666;color:#ccc;padding:3px 3px;border-radius:1px}
.swatch{width:18px;background:#b2b2b2;border-left:1px solid #111;border-top:1px solid #111}
.modlist{height:19px;flex:none;margin-top:11px;background:#5e5e5e;width:233px}
.stack{height:126px;flex:none;margin-top:6px;border:2px solid #fff;background:#444}
.stackrow{height:17px;display:flex;align-items:center;padding-left:6px;border-bottom:1px solid #666}
.stackrow .tri{margin-right:7px}
.stackitem{flex:1;height:16px;border:1px solid #5a84bd;display:flex;align-items:center;color:#fff;padding-left:2px;justify-content:space-between;padding-right:6px;margin-right:1px}
.stackitem svg{width:12px;height:12px}
.stacktools{height:20px;flex:none;margin-top:8px;display:flex;align-items:center;padding-left:3px}
.stacktools svg{width:16px;height:16px}
.ts{width:1px;height:15px;background:#111;margin:0 9px 0 10px}
.stacktools .trash{margin-left:9px}
.sash{height:3px;flex:none;margin-top:18px;display:flex;align-items:center;gap:3px}
.sash i{display:block;flex:1;height:1px;background:#666}
.sash span{width:12px;height:3px;border-top:2px dotted #aaa}
.rollwrap{height:214px;flex:none;margin-top:6px;display:flex;margin-left:-1px}
.rollout{width:226px;flex:none;background:#4f4f4f;border-radius:4px 4px 0 0;position:relative;color:#eee}
.rhead{height:18px;display:flex;align-items:center;padding-left:5px;position:relative}
.blk.wh{border-width:4px;border-top:5px solid #ccc;border-bottom:0;margin-right:9px}
.rhead strong{font-size:12px;font-weight:bold;color:#fff}
.dots{position:absolute;right:9px;top:6px;width:6px;height:5px;background:repeating-linear-gradient(90deg,#888 0 1px,transparent 1px 2px)}
.subobj{height:21px;margin-top:5px;display:flex;align-items:center;justify-content:flex-start;padding-left:54px;gap:8px}
.subobj svg{width:16px;height:16px}
.subon{width:22px;height:21px;background:#5a84bd;border-radius:3px;display:flex;align-items:center;justify-content:center;margin:0 -3px 0 -4px}
.cb{height:19px;display:flex;align-items:center;padding-left:42px;color:#eee}
.cb:first-of-type{margin-top:5px}
.cb>i{width:11px;height:11px;background:#666;border:1px solid #3e3e3e;margin-right:2px}
.cb.off{color:#8a8a8a;height:20px}
.cb.off>i{background:#555}
.spin{background:#666;display:flex;align-items:center;padding-left:2px;position:relative;color:#ccc;flex:none}
.ud{position:absolute;right:3px;top:50%;margin-top:-5px;width:6px;height:10px}
.ud::before,.ud::after{content:"";position:absolute;left:0;border:3px solid transparent}
.ud::before{top:-1px;border-bottom:4px solid #ccc;border-top:0}
.ud::after{bottom:-1px;border-top:4px solid #ccc;border-bottom:0}
.ang{width:79px;height:16px;margin-left:11px;background:#5a5a5a;color:#888;padding-left:3px}
.btns{display:flex;padding-left:41px;color:#ddd}
.btns span{height:18px;background:#666;border-radius:3px;text-align:center;line-height:17px;flex:none}
.r1{margin-top:2px;gap:8px}
.r1 span{width:70px}
.r2{margin-top:4px}
.r2 span{width:55px;height:17px;line-height:16px}
.r2 span:nth-of-type(2){width:57px;margin-left:8px}
.r2 em{width:10px;height:17px;background:#666;margin-left:5px;position:relative;display:block;border-radius:2px}
.r2 em .ud{right:2px}
.r2 span + em + span + em{margin-left:3px}
.preview{margin:4px 0 0 32px;padding:0 0 6px 2px;width:158px;height:39px;border:1px solid #383838;border-radius:3px;display:flex;align-items:center;color:#eee}
.preview legend{padding:0 2px;margin-left:3px;line-height:12px;font-size:12px}
.rad{width:11px;height:11px;border-radius:50%;background:#5f5f5f;flex:none;margin-right:6px}
.rad.on{background:#eee;border:2px solid #666;box-shadow:0 0 0 1px #555}
.preview span{margin-right:8px;flex:none}
.selinfo{position:absolute;left:124px;top:198px;color:#eee}
.sbar{width:5px;margin-left:4px;background:#333;border-radius:3px;flex:none}
.sbar i{display:block;height:36px;background:#666;border-radius:3px;margin-top:2px}

/* time slider */
.timeslider{height:23px;flex:none;display:flex;align-items:flex-start;padding:3px 0 0 3px;background:#444}
.vg{display:block;width:2px;height:20px;border-left:2px dotted #777;margin-right:5px;flex:none}
.vg.short{height:22px;margin:0}
.ts-b{width:14px;height:16px;background:#5e5e5e;border-radius:3px;display:flex;align-items:center;justify-content:center}
.ts-b svg{width:8px;height:12px}
.ts-m{width:123px;height:16px;margin:0 2px;background:#5e5e5e;border-radius:3px;text-align:center;line-height:16px;color:#ccc;font-size:11px}
.track{height:27px;flex:none;display:flex;background:#444;padding-left:3px;position:relative}
.track::before{content:"";position:absolute;left:8px;right:0;top:0;height:1px;background:#111}
.curve{width:16px;height:14px;margin:6px 0 0 20px}
.bar{width:1273px;height:26px;margin:1px 0 0 4px;background:#2a2a2a;position:relative;flex:none}
.ticks{height:14px;background:repeating-linear-gradient(90deg,#888 0 1px,transparent 1px 12.450px);margin-left:20px}
.labels{display:flex;margin:-1px 0 0 -11.125px;color:#aaa;font-family:"Liberation Sans",sans-serif;font-size:11px;line-height:11px;width:1308px}
.labels span{width:62.250px;flex:none;text-align:center}
.key{position:absolute;left:16px;top:0;width:8px;height:26px;background:rgba(150,140,40,.75)}

/* status */
.status{height:56px;flex:none;display:flex;background:#444;padding-left:4px;align-items:flex-start;position:relative}
.scr{width:98px;margin-top:5px;flex:none}
.pink{height:21px;background:#dcc3c4;border:1px solid #eee;outline:1px solid #777;outline-offset:-2px}
.mini{height:23px;margin-top:2px;background:#fff;color:#888;border:2px solid #ccc;font-size:11.700px;line-height:17px;padding-left:2px;white-space:nowrap;overflow:hidden}
.vbar{width:1px;height:50px;background:#111;margin:3px 0 0 4px;flex:none}
.msg{width:332px;flex:none;margin:11px 0 0 6px;color:#eee}
.coords{width:451px;flex:none;display:flex;flex-direction:column}
.corow{height:27px;display:flex;align-items:center;margin-top:5px;color:#ddd}
.corow>svg{margin-right:11px}
.corow>svg:nth-of-type(3){margin-right:7px}
.axl{width:15px;flex:none;font-weight:bold;text-align:left}
.spin.cx{width:69px;height:18px}
.axl + .spin.cx{margin-right:2px}
.grid{margin-left:3px;white-space:pre;color:#eee}
.tagrow{display:flex;align-items:center;margin-left:310px;height:22px;margin-top:-1px}
.tl{width:1px;height:20px;background:#111;margin-right:1px}
.tagbtn{width:21px;height:20px;background:#5a84bd;border-radius:3px;display:flex;align-items:center;justify-content:center;margin-right:4px}
.tagbtn svg{width:15px;height:15px}
.tagrow span{color:#ddd}
.play{width:128px;flex:none;display:flex;flex-direction:column}
.pr{display:flex;align-items:center;height:24px;margin-top:5px;gap:6px}
.pr svg{width:14px;height:14px;flex:none}
.pr svg.bigp{width:16px;height:18px}
.psep{width:1px;height:20px;background:#111;flex:none}
.pr.second{margin-top:2px;padding:0;gap:3px;height:20px}
.pr.second .spin.fr{margin-left:5px}
.spin.fr{width:69px;height:16px}
.bigkey{width:40px;height:42px;flex:none;margin:7px 0 0 0;background:#5e5e5e;border-radius:3px}
.bigkey svg{width:40px;height:42px}
.keys{width:65px;flex:none;margin:8px 0 0 5px;display:flex;flex-direction:column;gap:3px}
.keys span{height:19px;background:#5e5e5e;border-radius:3px;text-align:center;line-height:18px;color:#ddd}
.keyopts{width:112px;flex:none;margin:7px 0 0 5px;display:flex;flex-direction:column}
.selobj{height:18px;background:#5e5e5e;color:#ccc;padding-left:5px}
.keyfil{display:flex;align-items:center;height:19px;margin-top:5px;gap:2px}
.keyfil svg{width:16px;height:18px;flex:none}
.keyfil span{width:85px;height:19px;background:#5e5e5e;border-radius:3px;line-height:18px;white-space:nowrap;overflow:hidden;color:#ddd;margin-left:8px;font-size:12px}
.nav{width:92px;flex:none;margin:8px 0 0 16px;display:grid;grid-template-columns:repeat(4,16px);column-gap:7px;row-gap:6px}
.nav svg{width:16px;height:16px}

/* taskbar */
.taskbar{height:40px;flex:none;display:flex;background:linear-gradient(90deg,#d8e5b8 0,#dfe3c6 24%,#e1dde0 42%,#e1dde0 58%,#dfe6c0 76%,#dde6bb 100%);color:#111}
.tk{width:48px;height:40px;display:flex;align-items:center;justify-content:center;flex:none;position:relative}
.tk svg{width:18px;height:18px}
.tk.pin1{margin-left:2px}
.tk.pin1 svg,.tk.ul svg,.tk.ie svg{width:24px;height:24px}
.tk.ul{margin-left:2px}
.tk.ie{margin-left:2px}
.tk.cur{background:#eef3df;margin-left:1px}
.tk.ul::after{content:"";position:absolute;left:4px;right:4px;bottom:0;height:2px;background:#0a78d2}
.tk.cur::after{left:0;right:0}
.bk{fill:#000}
.bs,.bs1,.bs2,.bd{fill:none;stroke:#111}
.bs{stroke-width:1.500}
.bs1{stroke-width:1}
.bs2{stroke-width:2.500}
.bd{stroke-width:1;stroke-dasharray:1 1}
.fold1{fill:#e0a020}.fold2{fill:#f6c445}.fold3{fill:#1f7fd0}
.ie1{fill:#7cc846}.ie2{fill:#fff}.ie3{fill:none;stroke:#7cc846;stroke-width:1.500}
.wps{fill:#d82a1e}
.wc1{fill:#2dc04c}.wc2{fill:#eeeeee}.wcw{fill:#fff}.wcg{fill:#666}
.tray{margin-left:auto;display:flex;align-items:center;height:40px;padding-right:25px}
.caret{width:12px;height:8px}
.trayi{width:16px;height:16px;margin-left:11px}
.tr1{fill:#e8c010}.tr2{fill:#2a8a2a}
.kbd{width:22px;height:16px;margin-left:6px}
.ime{width:16px;text-align:center;font-size:14px;margin-left:11px}
.ime.box{margin-left:13px;border:1px solid #333;font-size:12px;height:16px;line-height:14px}
.clock{display:flex;flex-direction:column;gap:8px;margin-left:14px;width:62px;font-size:12px;align-items:flex-start}
.notif{width:16px;height:16px;margin-left:19px}
.watermark{position:absolute;left:1113px;top:741px;font:15px/15px "Liberation Sans",sans-serif;color:rgba(255,255,255,.78);letter-spacing:.4px;white-space:nowrap}

/* menus */
.menu{position:absolute;background:#505050;border:1px solid #333;box-shadow:3px 3px 3px rgba(0,0,0,.45);color:#eee;z-index:5}
.gripm{height:2px;margin:2px 4px 0;border-top:2px dotted #aaa}
.m1{left:427px;top:44px;width:194px;height:438px}
.m1 .gripm{margin-bottom:9px}
.mi{height:20px;display:flex;align-items:center;justify-content:space-between;padding:0 5px 0 22px}
.mi.hl{background:#5b84bd;color:#fff}
.m1 hr{height:7px;margin:0 3px;border:0;background:linear-gradient(#505050 3px,#3e3e3e 3px,#3e3e3e 4px,#505050 4px)}
.gap{height:3px}
.arr{display:block;width:0;height:0;border:5px solid transparent;border-left:6px solid #cfd6e4;border-right:0}
.m2{left:624px;top:107px;width:153px;height:451px;z-index:6}
.m2 .gripm{margin-bottom:9px}
.si{height:20px;margin-bottom:3px;display:flex;align-items:center;padding-left:6px;gap:1px}
.si svg,.noicon{width:16px;height:16px;flex:none}
.si.hl{background:#5b84bd;color:#fff}
.si.off{color:#808080}
.tooltip{position:absolute;left:672px;top:492px;width:73px;height:17px;background:#fff;color:#111;z-index:7;text-align:center;line-height:16px;box-shadow:2px 2px 2px rgba(0,0,0,.5)}
```
